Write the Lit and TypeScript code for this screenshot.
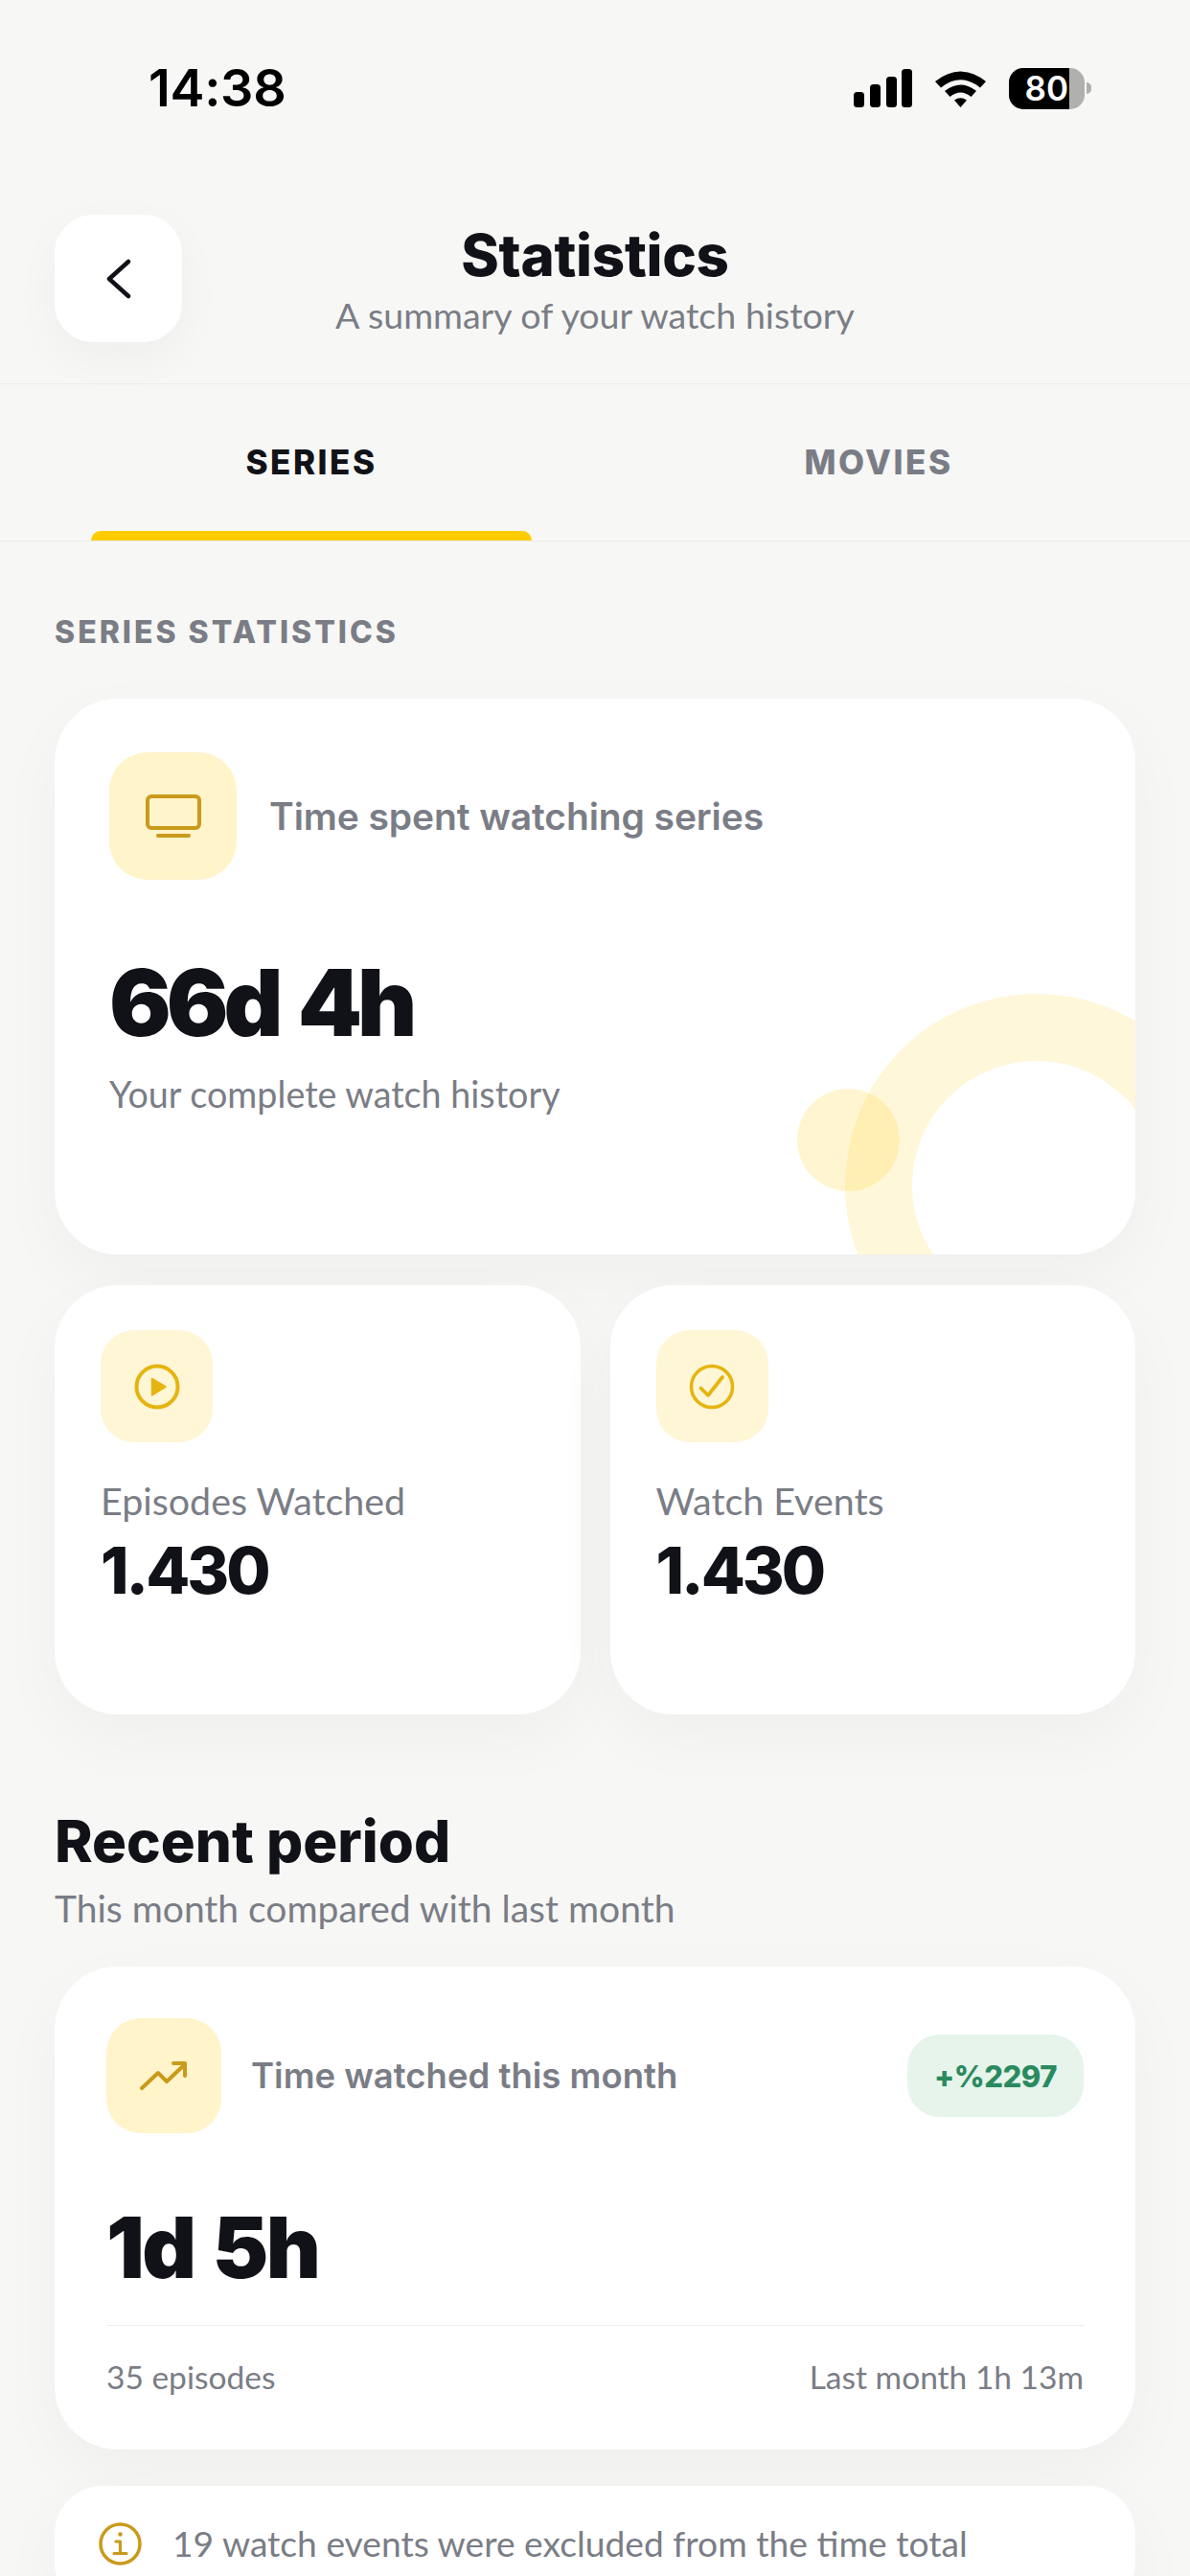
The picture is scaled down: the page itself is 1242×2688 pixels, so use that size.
import { LitElement, html, css } from "lit";
import { customElement } from "lit/decorators.js";

const gold = "#C99A1B";
const amber = "#E5B40F";

@customElement("app-root")
export class AppRoot extends LitElement {
  static styles = css`
    :host { display: block; width: 1242px; height: 2688px; overflow: hidden; background: #f7f7f5; font-family: "Lato", "Liberation Sans", sans-serif; color: #111218; }
    * { box-sizing: border-box; }
    svg { display: block; }
    .strong { font-family: "Inter", "Liberation Sans", sans-serif; }

    .status { height: 184px; padding: 0 103px 0 155px; display: flex; align-items: center; justify-content: space-between; }
    .time { font-family: "Inter", sans-serif; font-weight: 600; font-size: 54px; line-height: 60px; color: #000; letter-spacing: -0.3px; }
    .status-icons { display: flex; align-items: center; }
    .wifi { margin-left: 24px; }
    .battery { margin-left: 24px; width: 79px; height: 43px; border-radius: 15px; overflow: hidden; display: flex; background: #b0b0ae; }
    .battery-fill { width: 63px; background: #000; color: #fff; font-family: "Inter", sans-serif; font-weight: 600; font-size: 35px; line-height: 43px; text-align: right; padding-right: 1px; }
    .nub { margin-left: 2px; width: 5px; height: 12px; border-radius: 0 6px 6px 0; background: #b0b0ae; }

    .header { height: 217px; padding: 40px 57px 0; display: grid; grid-template-columns: 133px 1fr 133px; border-bottom: 1px solid #ececea; }
    .back { width: 133px; height: 133px; border-radius: 40px; background: #fff; box-shadow: 0 16px 48px rgba(0, 0, 0, 0.04); display: flex; align-items: center; justify-content: center; }
    .title-block { text-align: center; padding-top: 6px; }
    .title { font-size: 60px; line-height: 72px; font-weight: 800; letter-spacing: -0.3px; }
    .subtitle { font-size: 37.6px; line-height: 44px; margin-top: 5px; color: #7a7d86; white-space: nowrap; }

    .tabs { height: 164px; padding: 0 29px; display: grid; grid-template-columns: 1fr 1fr; border-bottom: 1px solid #ececea; }
    .tab { display: flex; flex-direction: column; align-items: center; padding-top: 59px; }
    .tab-text { font-size: 35px; line-height: 44px; font-weight: 800; letter-spacing: 2.5px; color: #7a7d86; }
    .tab.on .tab-text { color: #111218; }
    .bar { margin-top: auto; width: 460px; height: 10px; border-radius: 10px 10px 0 0; }
    .tab.on .bar { background: #ffcc00; }

    .content { padding: 75px 57px 0; }
    .section { font-size: 32px; line-height: 40px; font-weight: 800; letter-spacing: 3px; color: #7a7d86; margin-bottom: 49px; }
    .card { background: #fff; border-radius: 66px; box-shadow: 0 24px 70px rgba(0, 0, 0, 0.035); position: relative; overflow: hidden; }
    .icon { display: flex; align-items: center; justify-content: center; background: #fff4ca; flex: none; }
    .row { display: flex; align-items: center; }

    .hero { height: 580px; padding: 56px 57px; }
    .hero .icon { width: 133px; height: 133px; border-radius: 40px; }
    .hero-label { margin-left: 34px; font-size: 39px; line-height: 48px; font-weight: 600; letter-spacing: -0.1px; color: #7a7d86; }
    .hero-value { margin-top: 73px; font-size: 96px; line-height: 110px; font-weight: 900; letter-spacing: -5px; word-spacing: 6px; }
    .hero-sub { margin-top: 19px; font-size: 37.7px; line-height: 44px; color: #7a7d86; }
    .ring { position: absolute; left: 825px; top: 308px; width: 400px; height: 400px; border-radius: 50%; border: 70px solid rgba(255, 204, 0, 0.15); }
    .dot { position: absolute; left: 775px; top: 407px; width: 107px; height: 107px; border-radius: 50%; background: rgba(255, 204, 0, 0.18); }

    .grid { margin-top: 32px; display: grid; grid-template-columns: 1fr 1fr; gap: 31px; }
    .mini { height: 448px; padding: 47px 48px; }
    .mini .icon { width: 117px; height: 117px; border-radius: 35px; background: #fff6d6; }
    .mini-label { margin-top: 39px; font-size: 39.4px; line-height: 44px; color: #7a7d86; }
    .mini-value { margin-top: 13px; font-size: 67px; line-height: 76px; font-weight: 800; letter-spacing: -3px; }

    .h2 { margin-top: 96px; font-size: 60px; line-height: 72px; font-weight: 800; }
    .h2-sub { margin-top: 12px; font-size: 39px; line-height: 44px; color: #7a7d86; }

    .month { margin-top: 39px; height: 504px; padding: 54px; }
    .month .icon { width: 120px; height: 120px; border-radius: 36px; }
    .month-label { margin-left: 31px; font-size: 36.5px; line-height: 48px; font-weight: 600; color: #7a7d86; flex: 1; }
    .pill { width: 184px; height: 86px; border-radius: 34px; background: #e6f4ec; color: #2a8a5e; font-size: 31px; font-weight: 800; letter-spacing: -0.5px; display: flex; align-items: center; justify-content: center; }
    .month-value { margin-top: 69px; font-size: 88px; line-height: 100px; font-weight: 900; letter-spacing: -2.5px; word-spacing: 4px; }
    .rule { margin-top: 31px; height: 1px; background: #ececea; }
    .foot { margin-top: 31px; display: flex; justify-content: space-between; font-size: 33.5px; line-height: 44px; color: #7a7d86; }

    .note { margin-top: 38px; height: 130px; border-radius: 50px; padding: 38px 46px; display: flex; align-items: flex-start; }
    .note-text { margin-left: 32px; font-size: 37.2px; line-height: 44px; color: #7a7d86; white-space: nowrap; }
  `;

  render() {
    return html`
      <div class="status">
        <div class="time">14:38</div>
        <div class="status-icons">
          <svg width="61" height="40" viewBox="0 0 61 40" fill="#000">
            <rect x="0" y="24" width="11" height="16" rx="3.5"></rect>
            <rect x="17" y="16" width="11" height="24" rx="3.5"></rect>
            <rect x="34" y="8" width="11" height="32" rx="3.5"></rect>
            <rect x="50" y="0" width="11" height="40" rx="3.5"></rect>
          </svg>
          <svg class="wifi" width="53" height="40" viewBox="0 0 53 40">
            <path d="M0 13 Q26.5 -8 53 13 L47 19.500 Q26.500 3 6 19.500Z" fill="#000"></path>
            <path d="M10 23 Q26.500 10 43 23 L37.500 29 Q26.500 20 15.500 29Z" fill="#000"></path>
            <path d="M20 32.500 Q26.500 28 33 32.500 L26.500 40Z" fill="#000"></path>
          </svg>
          <div class="battery"><div class="battery-fill">80</div></div>
          <div class="nub"></div>
        </div>
      </div>

      <div class="header">
        <div class="back">
          <svg width="28" height="42" viewBox="0 0 28 42" fill="none" stroke="#111218" stroke-width="4.500" stroke-linecap="round" stroke-linejoin="round">
            <path d="M24 3 L4 21 L24 39"></path>
          </svg>
        </div>
        <div class="title-block">
          <div class="title strong">Statistics</div>
          <div class="subtitle">A summary of your watch history</div>
        </div>
      </div>

      <div class="tabs">
        <div class="tab on"><div class="tab-text strong">SERIES</div><div class="bar"></div></div>
        <div class="tab"><div class="tab-text strong">MOVIES</div><div class="bar"></div></div>
      </div>

      <div class="content">
        <div class="section strong">SERIES STATISTICS</div>

        <div class="card hero">
          <div class="ring"></div>
          <div class="dot"></div>
          <div class="row">
            <div class="icon">
              <svg width="60" height="46" viewBox="0 0 60 46" fill="none" stroke="${gold}" stroke-width="4" stroke-linecap="round" stroke-linejoin="round">
                <rect x="3" y="2" width="54" height="33" rx="4"></rect>
                <path d="M14 43 H46"></path>
              </svg>
            </div>
            <div class="hero-label strong">Time spent watching series</div>
          </div>
          <div class="hero-value strong">66d 4h</div>
          <div class="hero-sub">Your complete watch history</div>
        </div>

        <div class="grid">
          <div class="card mini">
            <div class="icon">
              <svg width="48" height="48" viewBox="0 0 48 48" fill="none">
                <circle cx="24" cy="24" r="21.500" stroke="${amber}" stroke-width="4"></circle>
                <path d="M18.500 15.500 L33 24 L18.500 33Z" fill="${amber}" stroke="${amber}" stroke-width="1.500" stroke-linejoin="round"></path>
              </svg>
            </div>
            <div class="mini-label">Episodes Watched</div>
            <div class="mini-value strong">1.430</div>
          </div>
          <div class="card mini">
            <div class="icon">
              <svg width="48" height="48" viewBox="0 0 48 48" fill="none" stroke="${amber}" stroke-linecap="round" stroke-linejoin="round">
                <circle cx="24" cy="24" r="21.500" stroke-width="3.500"></circle>
                <path d="M12.500 25.500 L20 33 L35 14" stroke-width="3.800"></path>
              </svg>
            </div>
            <div class="mini-label">Watch Events</div>
            <div class="mini-value strong">1.430</div>
          </div>
        </div>

        <div class="h2 strong">Recent period</div>
        <div class="h2-sub">This month compared with last month</div>

        <div class="card month">
          <div class="row">
            <div class="icon">
              <svg width="50" height="30" viewBox="0 0 50 30" fill="none" stroke="${gold}" stroke-width="4" stroke-linecap="round" stroke-linejoin="round">
                <path d="M2 28 L19 12 L28 21 L47 3"></path>
                <path d="M35 2 H47 V15"></path>
              </svg>
            </div>
            <div class="month-label strong">Time watched this month</div>
            <div class="pill strong">+%2297</div>
          </div>
          <div class="month-value strong">1d 5h</div>
          <div class="rule"></div>
          <div class="foot"><span>35 episodes</span><span>Last month 1h 13m</span></div>
        </div>

        <div class="card note">
          <svg width="45" height="45" viewBox="0 0 45 45" fill="none" stroke="${gold}" stroke-linecap="round">
            <circle cx="22.500" cy="22.500" r="20.500" stroke-width="3.500"></circle>
            <circle cx="22.500" cy="12.500" r="1.500" fill="${gold}" stroke-width="1.500"></circle>
            <path d="M18 20 H22.500 V32 M16 32.500 H29" stroke-width="3.200" stroke-linejoin="round"></path>
          </svg>
          <div class="note-text">19 watch events were excluded from the time total</div>
        </div>
      </div>
    `;
  }
}
